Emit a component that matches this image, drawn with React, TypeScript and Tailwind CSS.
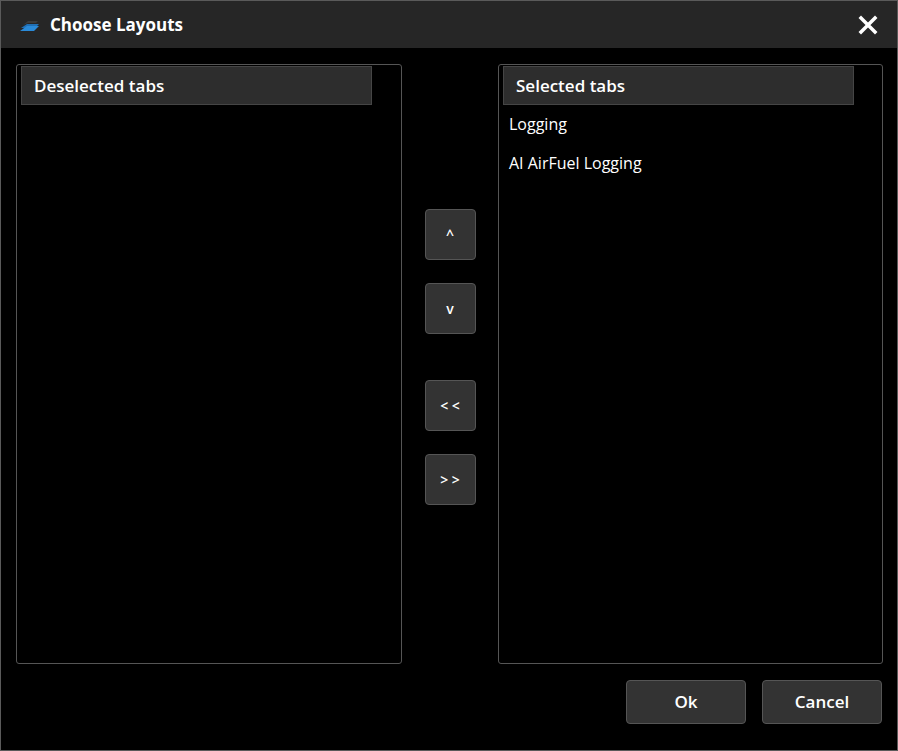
export default function App() {
  const font = { fontFamily: '"Open Sans", "Noto Sans", sans-serif' };
  const btn = "w-[51px] h-[51px] rounded-[4px] bg-[#333333] border border-[#555555] text-white text-[14px] font-semibold flex items-center justify-center";
  return (
    <div style={font} className="w-[898px] h-[751px] bg-black border border-[#5a5a5a] flex flex-col text-white overflow-hidden">
      <div className="h-[47px] bg-[#262626] flex items-center px-[18px] shrink-0">
        <svg width="22" height="14" viewBox="0 0 22 14" className="mr-[9px] mt-[3px]">
          <path d="M2 9 L8 5 L20 5 L16 9 Z" fill="#1f6fb5" />
          <path d="M1 12 L8 7 L20 7 L15 12 Z" fill="#2a8ad8" />
          <path d="M4 6 L9 2 L19 2 L17 4 L9 4 Z" fill="#3a3a3a" />
        </svg>
        <span className="text-[17px] font-bold">Choose Layouts</span>
        <div className="flex-1" />
        <svg width="20" height="20" viewBox="0 0 20 20" className="mr-[1px]">
          <path d="M3 3 L17 17 M17 3 L3 17" stroke="white" strokeWidth="3.5" strokeLinecap="square" />
        </svg>
      </div>
      <div className="flex pl-[15px] pt-[16px]">
        <div className="w-[386px] h-[600px] border border-[#555555] rounded-[3px] pt-[1px] pl-[4px]">
          <div className="w-[351px] h-[39px] bg-[#2d2d2d] border border-[#454545] flex items-center px-[12px] text-[17px] font-semibold">Deselected tabs</div>
        </div>
        <div className="w-[96px] flex flex-col items-center pt-[145px]">
          <div className={btn}>^</div>
          <div className={btn + " mt-[23px]"}>v</div>
          <div className={btn + " mt-[46px]"}>&lt; &lt;</div>
          <div className={btn + " mt-[23px]"}>&gt; &gt;</div>
        </div>
        <div className="w-[385px] h-[600px] border border-[#555555] rounded-[3px] pt-[1px] pl-[4px]">
          <div className="w-[351px] h-[39px] bg-[#2d2d2d] border border-[#454545] flex items-center px-[12px] text-[17px] font-semibold">Selected tabs</div>
          <div className="text-[16px] pl-[6px] mt-[7px] h-[39px]">Logging</div>
          <div className="text-[16px] pl-[6px]">AI AirFuel Logging</div>
        </div>
      </div>
      <div className="flex justify-end gap-[16px] pr-[15px] mt-[16px]">
        <div className="w-[120px] h-[44px] rounded-[4px] bg-[#333333] border border-[#555555] flex items-center justify-center text-[17px] font-semibold">Ok</div>
        <div className="w-[120px] h-[44px] rounded-[4px] bg-[#333333] border border-[#555555] flex items-center justify-center text-[17px] font-semibold">Cancel</div>
      </div>
    </div>
  );
}
